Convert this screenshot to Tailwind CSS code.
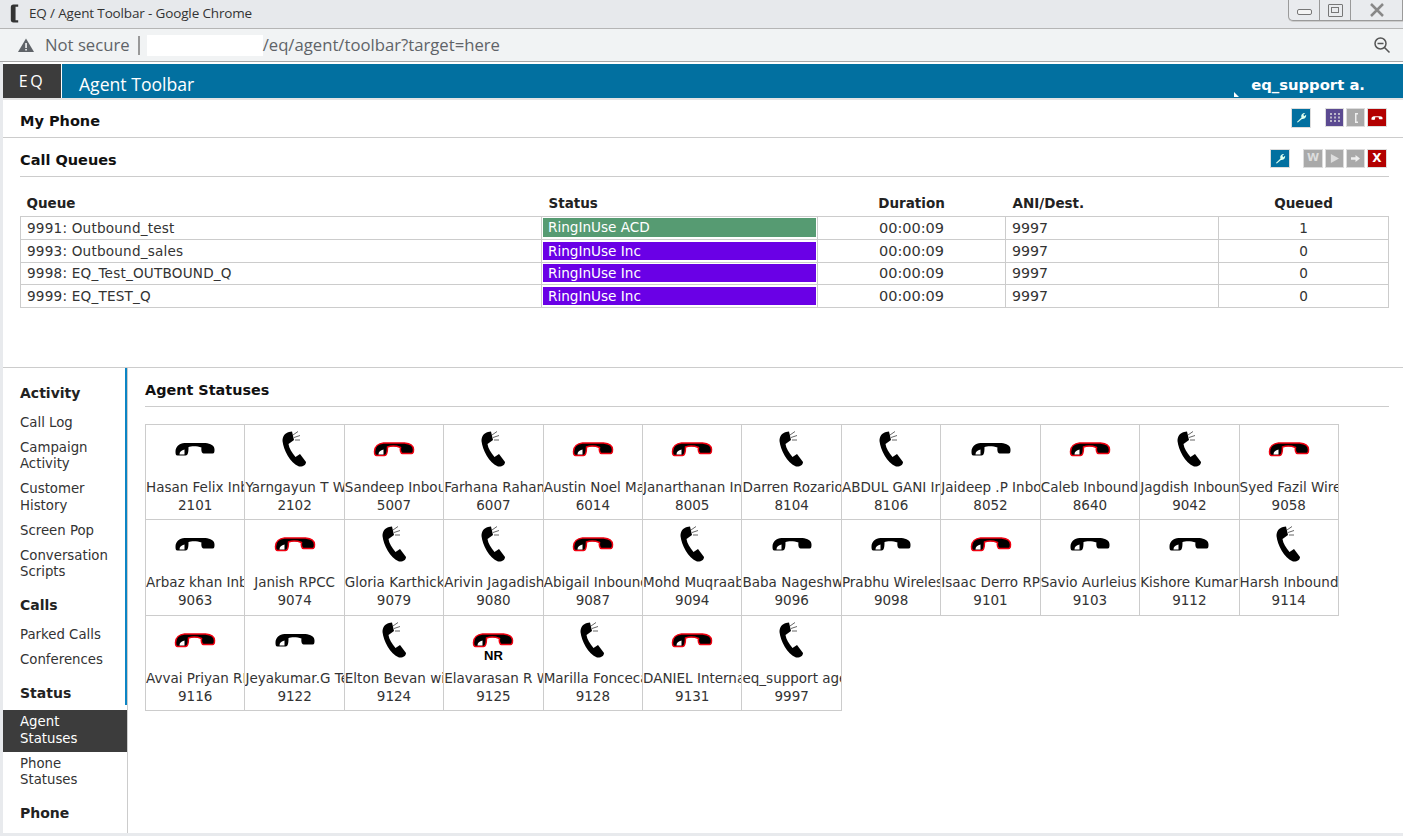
<!DOCTYPE html>
<html>
<head>
<meta charset="utf-8">
<script src="https://cdn.jsdelivr.net/npm/@tailwindcss/browser@4"></script>
</head>
<body class="w-[1403px] h-[836px] overflow-hidden bg-[#e8eaed] font-['DejaVu_Sans',sans-serif] text-[#333] text-[13.500px]">
<svg class="hidden">
  <symbol id="hang" viewBox="-1.500 -1.500 42 16"><path d="M0 9 C0 4 4 1 9 0.500 L30 0.500 C35 1 39 3 39 7 C39 9 39 11 37 11 L28 11 C26 11 25.500 7 26 5 C22 3.500 16 3.500 13 4.500 C13 8 13 13 10 13 L2 13 C0 13 0 11 0 9Z"/><path d="M4 12 C4 9 6 8 9 7 L9 12Z" fill="#fff" stroke="none"/></symbol>
  <symbol id="ring" viewBox="0 0 25 38"><path d="M0.500 11 C0.500 6 3 3 7 2 L10 1.500 L12 10 L6.500 14 C7 18 10 23 13.500 27 L18 24 L24 32 C24 35 21 37 17 36.500 C8 33 1.500 20 0.500 11Z"/><path d="M11 5 L16 1.500 M12 7.500 L18 5.500 M13 10 L18 10" stroke="#666" fill="none" stroke-width="1"/></symbol>
</svg>

<!-- browser title bar -->
<div class="h-[29px] bg-[#e7e9ec] border-b border-[#b5b5b5] flex justify-between font-['Open_Sans',sans-serif] text-[#333]">
  <div class="flex items-center h-[26px] pl-[10px] gap-[10px] text-[13.500px] tracking-[-0.150px]">
    <svg viewBox="0 0 8 18" class="w-[9px] h-[19px]"><path d="M7.500 0.500 H3 Q0.500 0.500 0.500 3 V15 Q0.500 17.500 3 17.500 H7.500 V15.500 H5 V2.500 H7.500Z" fill="#333"/></svg>
    <span>EQ / Agent Toolbar - Google Chrome</span>
  </div>
  <div class="flex h-[21px] w-[115px] border border-t-0 border-[#9a9a9a] rounded-bl-[5px] bg-[#e9ebee] shadow-[0_1px_0_#ccc]">
    <div class="w-[30px] flex items-center justify-center"><div class="w-[15px] h-[6px] border border-[#777] rounded-[2px] bg-[#f4f4f4] mt-[4px]"></div></div>
    <div class="w-[32px] border-x border-[#999] flex items-center justify-center"><div class="w-[15px] h-[13px] border border-[#777] rounded-[1px] flex items-center justify-center"><div class="w-[8px] h-[6px] border border-[#777]"></div></div></div>
    <div class="flex-1 flex items-center justify-center"><svg viewBox="0 0 16 14" class="w-[16px] h-[14px]"><path d="M2 1 L14 13 M14 1 L2 13" stroke="#888" stroke-width="2.500"/></svg></div>
  </div>
</div>
<!-- address bar -->
<div class="h-[33px] bg-[#f1f3f4] border-b border-[#a8a8a8] flex items-center font-['Open_Sans',sans-serif] text-[16.700px] text-[#5f6368] relative">
  <svg viewBox="0 0 16 14" class="w-[16px] h-[14px] ml-[18px]"><path d="M8 0.500 L16 14 H0Z" fill="#5f6368"/><rect x="7.300" y="5" width="1.500" height="5" fill="#fff"/><rect x="7.300" y="11" width="1.500" height="1.500" fill="#fff"/></svg>
  <span class="ml-[11px]">Not secure</span>
  <span class="ml-[8px] w-[2px] h-[19px] bg-[#999]"></span>
  <span class="ml-[7px] w-[116px] h-[21px] bg-white"></span>
  <span>/eq/agent/toolbar?target=here</span>
  <svg viewBox="0 0 18 18" class="w-[18px] h-[18px] ml-auto mr-[12px]"><circle cx="7.500" cy="7.500" r="5.500" fill="none" stroke="#555" stroke-width="1.500"/><path d="M4.500 7.500 H10.500 M11.500 11.500 L16.500 16.500" stroke="#555" stroke-width="1.500"/></svg>
</div>

<div class="ml-[3px] h-[771px] bg-white flex flex-col">
  <!-- header -->
  <header class="h-[34px] mt-[2px] bg-[#0270a0] flex text-white shrink-0 relative">
    <div class="w-[59px] bg-[#3c3c3c] border-r border-white flex justify-center pt-[5px] font-['Open_Sans',sans-serif] text-[16px] tracking-[2.500px] leading-[24px]">EQ</div>
    <div class="ml-[17px] pt-[8px] text-[17.600px] leading-[24px] font-['Open_Sans',sans-serif]">Agent Toolbar</div>
    <div class="ml-auto mr-[38px] pt-[12px] text-[14.800px] leading-[18px] font-bold">eq_support a.</div>
    <div class="absolute left-[1231px] bottom-[1px] w-0 h-0 border-l-[5px] border-t-[5px] border-l-white border-t-transparent"></div>
  </header>
  <div class="h-[2px] bg-[#e4e4e4] shrink-0"></div>

  <!-- my phone -->
  <section class="h-[38px] border-b border-[#ccc] flex items-center px-[17px] shrink-0 pt-[6px]">
    <h2 class="font-bold text-[14.500px] text-[#111]">My Phone</h2>
    <div class="ml-auto flex items-center gap-[4px] mt-[-8px]">
      <span class="w-[18px] h-[18px] bg-[#0270a0] flex items-center justify-center shadow-[0_0_0_1px_#ddd] mr-[12px]"><svg viewBox="0 0 12 12" class="w-[11px] h-[11px]"><path d="M1 11 L6 6 C5 3 7 1 10 1 L8 3 L9 4.500 L11 3 C11.500 6 9 8 6.500 7.500 L2 11.500Z" fill="#dfe"/></svg></span>
      <span class="w-[17px] h-[17px] bg-[#5b4a91] flex items-center justify-center shadow-[0_0_0_1px_#ddd]"><svg viewBox="0 0 10 10" class="w-[10px] h-[10px]"><path d="M1 0 V10 M5 0 V10 M9 0 V10" stroke="#ddd" stroke-width="1.500" stroke-dasharray="2 1.500"/></svg></span>
      <span class="w-[17px] h-[17px] bg-[#a9a9a9] flex items-center justify-center shadow-[0_0_0_1px_#ddd]"><svg viewBox="0 0 6 10" class="w-[6px] h-[10px]"><path d="M5 0 H2 V10 H5 V8.500 H3.500 V1.500 H5Z" fill="#eee"/></svg></span>
      <span class="w-[18px] h-[17px] bg-[#b30000] flex items-center justify-center shadow-[0_0_0_1px_#ddd]"><svg class="w-[12px] h-[6px] fill-white"><use href="#hang"/></svg></span>
    </div>
  </section>

  <!-- call queues -->
  <section class="h-[230px] border-b border-[#ccc] px-[17px] shrink-0 relative">
    <div class="h-[39px] border-b border-[#ccc] flex items-center mr-[-3px] pt-[8px]">
      <h2 class="font-bold text-[14.500px] text-[#111]">Call Queues</h2>
      <div class="ml-auto flex items-center gap-[4px] mr-[3px] mt-[-6px]">
        <span class="w-[18px] h-[17px] bg-[#0270a0] flex items-center justify-center shadow-[0_0_0_1px_#ddd] mr-[11px]"><svg viewBox="0 0 12 12" class="w-[11px] h-[11px]"><path d="M1 11 L6 6 C5 3 7 1 10 1 L8 3 L9 4.500 L11 3 C11.500 6 9 8 6.500 7.500 L2 11.500Z" fill="#dfe"/></svg></span>
        <span class="w-[18px] h-[17px] bg-[#a9a9a9] flex items-center justify-center shadow-[0_0_0_1px_#ddd] text-[#ddd] text-[11px] font-bold">W</span>
        <span class="w-[17px] h-[17px] bg-[#a9a9a9] flex items-center justify-center shadow-[0_0_0_1px_#ddd]"><svg viewBox="0 0 10 10" class="w-[9px] h-[9px]"><path d="M1 0 L10 5 L1 10Z" fill="#ddd"/></svg></span>
        <span class="w-[17px] h-[17px] bg-[#a9a9a9] flex items-center justify-center shadow-[0_0_0_1px_#ddd]"><svg viewBox="0 0 10 10" class="w-[9px] h-[9px]"><path d="M0 3.500 H5 V1 L10 5 L5 9 V6.500 H0Z" fill="#eee"/></svg></span>
        <span class="w-[18px] h-[17px] bg-[#b30000] flex items-center justify-center shadow-[0_0_0_1px_#ddd] text-white text-[12px] font-bold">X</span>
      </div>
    </div>
    <table class="mt-[13px] w-[1368px] border-collapse table-fixed text-[13.600px] leading-[16px]">
      <colgroup><col class="w-[521px]"><col class="w-[276px]"><col class="w-[188px]"><col class="w-[213px]"><col class="w-[170px]"></colgroup>
      <thead class="text-[#222]">
        <tr class="h-[26px] border-b border-[#ccc] font-bold text-[13.500px]">
          <th class="text-left pl-[6px] font-bold">Queue</th><th class="text-left pl-[7px] font-bold">Status</th><th class="font-bold">Duration</th><th class="text-left pl-[7px] font-bold">ANI/Dest.</th><th class="font-bold">Queued</th>
        </tr>
      </thead>
      <tbody>
        <tr class="h-[23px]"><td class="border border-[#ccc] pl-[6px] tracking-[0.200px]">9991: Outbound_test</td><td class="border border-[#ccc] p-0"><div class="mx-px h-[19px] bg-[#569b72] text-white pl-[5px] leading-[19px]">RingInUse ACD</div></td><td class="border border-[#ccc] text-center text-[14.500px]">00:00:09</td><td class="border border-[#ccc] pl-[6px] text-[14.200px]">9997</td><td class="border border-[#ccc] text-center">1</td></tr>
        <tr class="h-[23px]"><td class="border border-[#ccc] pl-[6px] tracking-[0.200px]">9993: Outbound_sales</td><td class="border border-[#ccc] p-0"><div class="mx-px h-[18px] bg-[#6a00e6] text-white pl-[5px] leading-[18px]">RingInUse Inc</div></td><td class="border border-[#ccc] text-center text-[14.500px]">00:00:09</td><td class="border border-[#ccc] pl-[6px] text-[14.200px]">9997</td><td class="border border-[#ccc] text-center">0</td></tr>
        <tr class="h-[22px]"><td class="border border-[#ccc] pl-[6px] tracking-[0.200px]">9998: EQ_Test_OUTBOUND_Q</td><td class="border border-[#ccc] p-0"><div class="mx-px h-[18px] bg-[#6a00e6] text-white pl-[5px] leading-[18px]">RingInUse Inc</div></td><td class="border border-[#ccc] text-center text-[14.500px]">00:00:09</td><td class="border border-[#ccc] pl-[6px] text-[14.200px]">9997</td><td class="border border-[#ccc] text-center">0</td></tr>
        <tr class="h-[23px]"><td class="border border-[#ccc] pl-[6px] tracking-[0.200px]">9999: EQ_TEST_Q</td><td class="border border-[#ccc] p-0"><div class="mx-px h-[18px] bg-[#6a00e6] text-white pl-[5px] leading-[18px]">RingInUse Inc</div></td><td class="border border-[#ccc] text-center text-[14.500px]">00:00:09</td><td class="border border-[#ccc] pl-[6px] text-[14.200px]">9997</td><td class="border border-[#ccc] text-center">0</td></tr>
      </tbody>
    </table>
  </section>

  <!-- lower -->
  <div class="flex flex-1 min-h-0">
    <nav class="w-[125px] shrink-0 border-r border-[#ccc] relative pt-[4.500px] leading-[16.500px] overflow-hidden text-[13.300px]">
      <div class="absolute right-0 top-0 w-[2px] h-[337px] bg-[#0c85c4]"></div>
      <h3 class="font-bold text-[14px] text-[#222] pl-[17px] mt-[12px] mb-[9px] leading-[17px]">Activity</h3>
      <a class="block pl-[17px] py-[4.250px]">Call Log</a>
      <a class="block pl-[17px] py-[4.250px]">Campaign<br>Activity</a>
      <a class="block pl-[17px] py-[4.250px]">Customer<br>History</a>
      <a class="block pl-[17px] py-[4.250px]">Screen Pop</a>
      <a class="block pl-[17px] py-[4.250px]">Conversation<br>Scripts</a>
      <h3 class="font-bold text-[14px] text-[#222] pl-[17px] mt-[12px] mb-[9px] leading-[17px]">Calls</h3>
      <a class="block pl-[17px] py-[4.250px]">Parked Calls</a>
      <a class="block pl-[17px] py-[4.250px]">Conferences</a>
      <h3 class="font-bold text-[14px] text-[#222] pl-[17px] mt-[12px] mb-[8px] leading-[17px]">Status</h3>
      <a class="block pl-[17px] py-[4.250px] bg-[#3c3c3c] text-white">Agent<br>Statuses</a>
      <a class="block pl-[17px] py-[4.250px]">Phone<br>Statuses</a>
      <h3 class="font-bold text-[14px] text-[#222] pl-[17px] mt-[12px] mb-[8px] leading-[17px]">Phone</h3>
    </nav>
    <main class="flex-1 pl-[17px] pr-[14px]">
      <div class="h-[39px] border-b border-[#ccc] flex items-center font-bold text-[14.400px] text-[#111] pt-[7px]">Agent Statuses</div>
      <div class="mt-[17px] w-[1194px] grid grid-cols-12 auto-rows-[95.400px] border-t border-l border-[#ccc] text-center leading-[18px]">
        <div class="border-r border-b border-[#ccc] overflow-hidden whitespace-nowrap text-left">
          <div class="h-[48px] flex items-center justify-center"><svg class="w-[42px] h-[16px]"><use href="#hang"/></svg></div>
          <div class="h-[18px] mt-[5px] overflow-hidden">Hasan Felix Inbound</div><div class="text-center">2101</div>
        </div>
        <div class="border-r border-b border-[#ccc] overflow-hidden whitespace-nowrap text-left">
          <div class="h-[48px] flex items-center justify-center"><svg class="w-[25px] h-[38px]"><use href="#ring"/></svg></div>
          <div class="h-[18px] mt-[5px] overflow-hidden">Yarngayun T Wireless</div><div class="text-center">2102</div>
        </div>
        <div class="border-r border-b border-[#ccc] overflow-hidden whitespace-nowrap text-left">
          <div class="h-[48px] flex items-center justify-center"><svg class="w-[42px] h-[16px] stroke-[#f00010] stroke-[1.500px]"><use href="#hang"/></svg></div>
          <div class="h-[18px] mt-[5px] overflow-hidden">Sandeep Inbound</div><div class="text-center">5007</div>
        </div>
        <div class="border-r border-b border-[#ccc] overflow-hidden whitespace-nowrap text-left">
          <div class="h-[48px] flex items-center justify-center"><svg class="w-[25px] h-[38px]"><use href="#ring"/></svg></div>
          <div class="h-[18px] mt-[5px] overflow-hidden">Farhana Rahaman</div><div class="text-center">6007</div>
        </div>
        <div class="border-r border-b border-[#ccc] overflow-hidden whitespace-nowrap text-left">
          <div class="h-[48px] flex items-center justify-center"><svg class="w-[42px] h-[16px] stroke-[#f00010] stroke-[1.500px]"><use href="#hang"/></svg></div>
          <div class="h-[18px] mt-[5px] overflow-hidden">Austin Noel Martin</div><div class="text-center">6014</div>
        </div>
        <div class="border-r border-b border-[#ccc] overflow-hidden whitespace-nowrap text-left">
          <div class="h-[48px] flex items-center justify-center"><svg class="w-[42px] h-[16px] stroke-[#f00010] stroke-[1.500px]"><use href="#hang"/></svg></div>
          <div class="h-[18px] mt-[5px] overflow-hidden">Janarthanan Inbound</div><div class="text-center">8005</div>
        </div>
        <div class="border-r border-b border-[#ccc] overflow-hidden whitespace-nowrap text-left">
          <div class="h-[48px] flex items-center justify-center"><svg class="w-[25px] h-[38px]"><use href="#ring"/></svg></div>
          <div class="h-[18px] mt-[5px] overflow-hidden">Darren Rozario</div><div class="text-center">8104</div>
        </div>
        <div class="border-r border-b border-[#ccc] overflow-hidden whitespace-nowrap text-left">
          <div class="h-[48px] flex items-center justify-center"><svg class="w-[25px] h-[38px]"><use href="#ring"/></svg></div>
          <div class="h-[18px] mt-[5px] overflow-hidden">ABDUL GANI Inbound</div><div class="text-center">8106</div>
        </div>
        <div class="border-r border-b border-[#ccc] overflow-hidden whitespace-nowrap text-left">
          <div class="h-[48px] flex items-center justify-center"><svg class="w-[42px] h-[16px]"><use href="#hang"/></svg></div>
          <div class="h-[18px] mt-[5px] overflow-hidden">Jaideep .P Inbound</div><div class="text-center">8052</div>
        </div>
        <div class="border-r border-b border-[#ccc] overflow-hidden whitespace-nowrap text-left">
          <div class="h-[48px] flex items-center justify-center"><svg class="w-[42px] h-[16px] stroke-[#f00010] stroke-[1.500px]"><use href="#hang"/></svg></div>
          <div class="h-[18px] mt-[5px] overflow-hidden">Caleb Inbound</div><div class="text-center">8640</div>
        </div>
        <div class="border-r border-b border-[#ccc] overflow-hidden whitespace-nowrap text-left">
          <div class="h-[48px] flex items-center justify-center"><svg class="w-[25px] h-[38px]"><use href="#ring"/></svg></div>
          <div class="h-[18px] mt-[5px] overflow-hidden">Jagdish Inbound</div><div class="text-center">9042</div>
        </div>
        <div class="border-r border-b border-[#ccc] overflow-hidden whitespace-nowrap text-left">
          <div class="h-[48px] flex items-center justify-center"><svg class="w-[42px] h-[16px] stroke-[#f00010] stroke-[1.500px]"><use href="#hang"/></svg></div>
          <div class="h-[18px] mt-[5px] overflow-hidden">Syed Fazil Wireless</div><div class="text-center">9058</div>
        </div>

        <div class="border-r border-b border-[#ccc] overflow-hidden whitespace-nowrap text-left">
          <div class="h-[48px] flex items-center justify-center"><svg class="w-[42px] h-[16px]"><use href="#hang"/></svg></div>
          <div class="h-[18px] mt-[5px] overflow-hidden">Arbaz khan Inbound</div><div class="text-center">9063</div>
        </div>
        <div class="border-r border-b border-[#ccc] overflow-hidden whitespace-nowrap text-left">
          <div class="h-[48px] flex items-center justify-center"><svg class="w-[42px] h-[16px] stroke-[#f00010] stroke-[1.500px]"><use href="#hang"/></svg></div>
          <div class="h-[18px] mt-[5px] overflow-hidden text-center">Janish RPCC</div><div class="text-center">9074</div>
        </div>
        <div class="border-r border-b border-[#ccc] overflow-hidden whitespace-nowrap text-left">
          <div class="h-[48px] flex items-center justify-center"><svg class="w-[25px] h-[38px]"><use href="#ring"/></svg></div>
          <div class="h-[18px] mt-[5px] overflow-hidden">Gloria Karthick</div><div class="text-center">9079</div>
        </div>
        <div class="border-r border-b border-[#ccc] overflow-hidden whitespace-nowrap text-left">
          <div class="h-[48px] flex items-center justify-center"><svg class="w-[25px] h-[38px]"><use href="#ring"/></svg></div>
          <div class="h-[18px] mt-[5px] overflow-hidden">Arivin Jagadish</div><div class="text-center">9080</div>
        </div>
        <div class="border-r border-b border-[#ccc] overflow-hidden whitespace-nowrap text-left">
          <div class="h-[48px] flex items-center justify-center"><svg class="w-[42px] h-[16px] stroke-[#f00010] stroke-[1.500px]"><use href="#hang"/></svg></div>
          <div class="h-[18px] mt-[5px] overflow-hidden">Abigail Inbound</div><div class="text-center">9087</div>
        </div>
        <div class="border-r border-b border-[#ccc] overflow-hidden whitespace-nowrap text-left">
          <div class="h-[48px] flex items-center justify-center"><svg class="w-[25px] h-[38px]"><use href="#ring"/></svg></div>
          <div class="h-[18px] mt-[5px] overflow-hidden">Mohd Muqraab</div><div class="text-center">9094</div>
        </div>
        <div class="border-r border-b border-[#ccc] overflow-hidden whitespace-nowrap text-left">
          <div class="h-[48px] flex items-center justify-center"><svg class="w-[42px] h-[16px]"><use href="#hang"/></svg></div>
          <div class="h-[18px] mt-[5px] overflow-hidden">Baba Nageshwar</div><div class="text-center">9096</div>
        </div>
        <div class="border-r border-b border-[#ccc] overflow-hidden whitespace-nowrap text-left">
          <div class="h-[48px] flex items-center justify-center"><svg class="w-[42px] h-[16px]"><use href="#hang"/></svg></div>
          <div class="h-[18px] mt-[5px] overflow-hidden">Prabhu Wireless</div><div class="text-center">9098</div>
        </div>
        <div class="border-r border-b border-[#ccc] overflow-hidden whitespace-nowrap text-left">
          <div class="h-[48px] flex items-center justify-center"><svg class="w-[42px] h-[16px] stroke-[#f00010] stroke-[1.500px]"><use href="#hang"/></svg></div>
          <div class="h-[18px] mt-[5px] overflow-hidden">Isaac Derro RPCC</div><div class="text-center">9101</div>
        </div>
        <div class="border-r border-b border-[#ccc] overflow-hidden whitespace-nowrap text-left">
          <div class="h-[48px] flex items-center justify-center"><svg class="w-[42px] h-[16px]"><use href="#hang"/></svg></div>
          <div class="h-[18px] mt-[5px] overflow-hidden">Savio Aurleius</div><div class="text-center">9103</div>
        </div>
        <div class="border-r border-b border-[#ccc] overflow-hidden whitespace-nowrap text-left">
          <div class="h-[48px] flex items-center justify-center"><svg class="w-[42px] h-[16px]"><use href="#hang"/></svg></div>
          <div class="h-[18px] mt-[5px] overflow-hidden">Kishore Kumar</div><div class="text-center">9112</div>
        </div>
        <div class="border-r border-b border-[#ccc] overflow-hidden whitespace-nowrap text-left">
          <div class="h-[48px] flex items-center justify-center"><svg class="w-[25px] h-[38px]"><use href="#ring"/></svg></div>
          <div class="h-[18px] mt-[5px] overflow-hidden">Harsh Inbound</div><div class="text-center">9114</div>
        </div>

        <div class="border-r border-b border-[#ccc] overflow-hidden whitespace-nowrap text-left">
          <div class="h-[48px] flex items-center justify-center"><svg class="w-[42px] h-[16px] stroke-[#f00010] stroke-[1.500px]"><use href="#hang"/></svg></div>
          <div class="h-[18px] mt-[5px] overflow-hidden">Avvai Priyan RPCC</div><div class="text-center">9116</div>
        </div>
        <div class="border-r border-b border-[#ccc] overflow-hidden whitespace-nowrap text-left">
          <div class="h-[48px] flex items-center justify-center"><svg class="w-[42px] h-[16px]"><use href="#hang"/></svg></div>
          <div class="h-[18px] mt-[5px] overflow-hidden">Jeyakumar.G Team</div><div class="text-center">9122</div>
        </div>
        <div class="border-r border-b border-[#ccc] overflow-hidden whitespace-nowrap text-left">
          <div class="h-[48px] flex items-center justify-center"><svg class="w-[25px] h-[38px]"><use href="#ring"/></svg></div>
          <div class="h-[18px] mt-[5px] overflow-hidden">Elton Bevan wireless</div><div class="text-center">9124</div>
        </div>
        <div class="border-r border-b border-[#ccc] overflow-hidden whitespace-nowrap text-left">
          <div class="h-[48px] flex items-center justify-center relative"><svg class="w-[42px] h-[16px] stroke-[#f00010] stroke-[1.500px]"><use href="#hang"/></svg><span class="absolute left-0 right-0 top-[33px] text-center font-['Liberation_Sans',sans-serif] font-bold text-[13px] leading-[13px] text-black">NR</span></div>
          <div class="h-[18px] mt-[5px] overflow-hidden">Elavarasan R Wireless</div><div class="text-center">9125</div>
        </div>
        <div class="border-r border-b border-[#ccc] overflow-hidden whitespace-nowrap text-left">
          <div class="h-[48px] flex items-center justify-center"><svg class="w-[25px] h-[38px]"><use href="#ring"/></svg></div>
          <div class="h-[18px] mt-[5px] overflow-hidden">Marilla Fonceca</div><div class="text-center">9128</div>
        </div>
        <div class="border-r border-b border-[#ccc] overflow-hidden whitespace-nowrap text-left">
          <div class="h-[48px] flex items-center justify-center"><svg class="w-[42px] h-[16px] stroke-[#f00010] stroke-[1.500px]"><use href="#hang"/></svg></div>
          <div class="h-[18px] mt-[5px] overflow-hidden">DANIEL Internal</div><div class="text-center">9131</div>
        </div>
        <div class="border-r border-b border-[#ccc] overflow-hidden whitespace-nowrap text-left">
          <div class="h-[48px] flex items-center justify-center"><svg class="w-[25px] h-[38px]"><use href="#ring"/></svg></div>
          <div class="h-[18px] mt-[5px] overflow-hidden">eq_support agent</div><div class="text-center">9997</div>
        </div>
      </div>
    </main>
  </div>
</div>
</body>
</html>
